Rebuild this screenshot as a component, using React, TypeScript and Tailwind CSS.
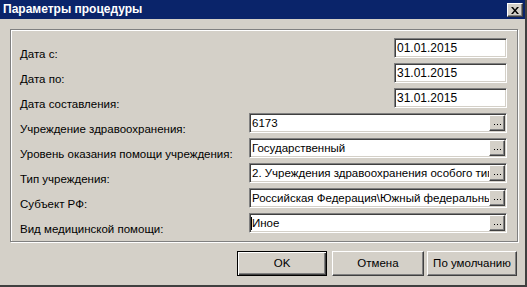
import { ReactNode } from "react";

const dates = [
  { label: "Дата с:", value: "01.01.2015" },
  { label: "Дата по:", value: "31.01.2015" },
  { label: "Дата составления:", value: "31.01.2015" },
];

const lookups = [
  { label: "Учреждение здравоохранения:", value: "6173" },
  { label: "Уровень оказания помощи учреждения:", value: "Государственный" },
  { label: "Тип учреждения:", value: "2. Учреждения здравоохранения особого типа" },
  { label: "Субъект РФ:", value: "Российская Федерация\\Южный федеральный округ" },
  { label: "Вид медицинской помощи:", value: "Иное", caret: true },
];

function Sunken({ className, children }: { className: string; children: ReactNode }) {
  return (
    <div
      className={`h-[20px] flex items-center bg-white border border-t-[#808080] border-l-[#808080] border-b-white border-r-white shadow-[inset_1px_1px_0_#404040,inset_-1px_-1px_0_#d4d0c8] p-[1px] ${className}`}
    >
      {children}
    </div>
  );
}

function Row({ label, children }: { label: string; children: ReactNode }) {
  return (
    <div className="h-[20px] flex items-end justify-between">
      <span className="leading-[14px] -mb-[3px] whitespace-nowrap">{label}</span>
      {children}
    </div>
  );
}

function Button({ label, width, primary }: { label: string; width: string; primary?: boolean }) {
  return (
    <button
      className={`h-[25px] ${width} flex items-center justify-center bg-[#d4d0c8] ${
        primary
          ? "border border-black shadow-[inset_1px_1px_0_#fff,inset_-1px_-1px_0_#404040,inset_-2px_-2px_0_#808080]"
          : "border border-t-white border-l-white border-b-[#404040] border-r-[#404040] shadow-[inset_-1px_-1px_0_#808080]"
      }`}
    >
      {label}
    </button>
  );
}

export default function App() {
  return (
    <div className="w-[527px] h-[287px] bg-[#d4d0c8] flex flex-col border-r-2 border-b-2 border-r-[#404040] border-b-[#404040] font-['Liberation_Sans',Arial,sans-serif] text-[11.5px] text-black">
      <div className="h-[19px] bg-[#0a246a] flex items-start justify-between pl-[3px] pr-[2px]">
        <span className="text-white font-bold text-[12px] leading-[19px]">Параметры процедуры</span>
        <div className="mt-[3px] w-[16px] h-[14px] flex items-center justify-center bg-[#d4d0c8] border border-t-white border-l-white border-b-[#404040] border-r-[#404040] shadow-[inset_-1px_-1px_0_#808080]">
          <svg width="8" height="7" viewBox="0 0 8 7">
            <path d="M0 0h2l2 2.5L6 0h2L5 3.5 8 7H6L4 4.5 2 7H0l3-3.5z" fill="#000" />
          </svg>
        </div>
      </div>

      <div className="flex-1 pl-[10px] pr-[7px] pt-[10px]">
        <div className="h-[213px] border border-[#808080] shadow-[inset_1px_1px_0_#fff,1px_1px_0_#fff] pt-[8px] pl-[9px] pr-[10px] flex flex-col gap-[5px]">
          {dates.map((d) => (
            <Row key={d.label} label={d.label}>
              <Sunken className="w-[113px]">
                <span className="pl-[1px] leading-[16px] text-[12px]">{d.value}</span>
              </Sunken>
            </Row>
          ))}
          {lookups.map((l) => (
            <Row key={l.label} label={l.label}>
              <Sunken className="w-[258px]">
                <div className="flex-1 min-w-0 flex items-center overflow-hidden whitespace-nowrap leading-[16px]">
                  {l.caret && <span className="w-px h-[13px] bg-black shrink-0 -mr-px" />}
                  <span className="pl-[1px]">{l.value}</span>
                </div>
                <div className="w-[16px] h-[16px] shrink-0 flex items-center justify-center bg-[#d4d0c8] border border-t-white border-l-white border-b-[#404040] border-r-[#404040] shadow-[inset_-1px_-1px_0_#808080]">
                  <svg width="7" height="1" viewBox="0 0 7 1" className="mt-[3px]">
                    <rect x="0" y="0" width="1" height="1" fill="#000" />
                    <rect x="3" y="0" width="1" height="1" fill="#000" />
                    <rect x="6" y="0" width="1" height="1" fill="#000" />
                  </svg>
                </div>
              </Sunken>
            </Row>
          ))}
        </div>

        <div className="mt-[9px] mr-[1px] flex justify-end">
          <Button label="OK" width="w-[90px]" primary />
          <div className="w-[5px]" />
          <Button label="Отмена" width="w-[92px]" />
          <div className="w-[3px]" />
          <Button label="По умолчанию" width="w-[90px]" />
        </div>
      </div>
    </div>
  );
}
